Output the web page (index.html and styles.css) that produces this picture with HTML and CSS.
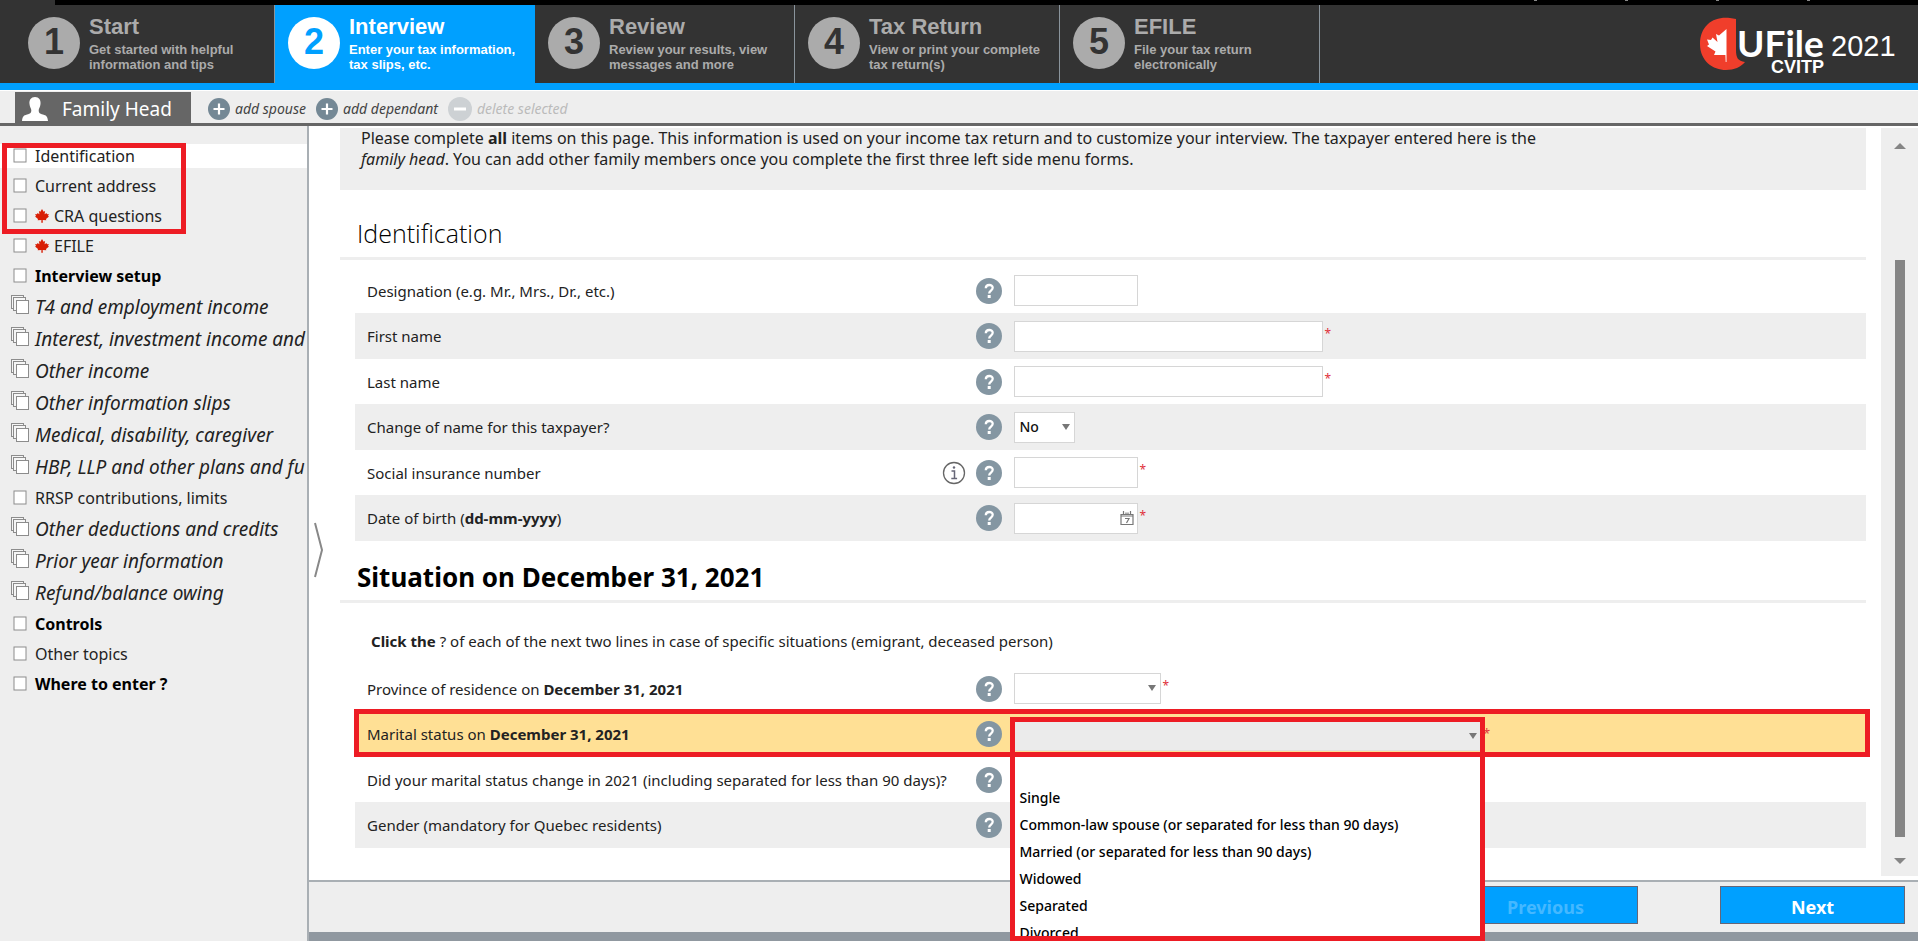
FILE: index.html
```
<!DOCTYPE html>
<html lang="en">
<head>
<meta charset="utf-8">
<title>UFile CVITP 2021 - Interview</title>
<link rel="stylesheet" href="styles.css">
</head>
<body>
<svg class="defs" aria-hidden="true">
  <symbol id="page" viewBox="0 0 18 20"><rect x="3" y="3" width="12" height="13" fill="#fff" stroke="#8c8c8c"/></symbol>
  <symbol id="stack" viewBox="0 0 18 20"><g fill="#f6f6f6" stroke="#8c8c8c"><rect x=".5" y=".5" width="12" height="13"/><rect x="2.5" y="2.5" width="12" height="13"/><rect x="5.5" y="5.5" width="12" height="13" fill="#fff"/></g></symbol>
  <symbol id="leaf" viewBox="0 0 14 14"><path fill="#d81e05" d="M7 0l1.6 2.8 1.5-.8-.5 3.3L11.500 4l.5 1.200 1.800-.3-.8 2 1 .7-3 2.500.3 1.200-3.600-.4.1 2.900H6.300l.1-2.900-3.700.4.300-1.200L0 7.600l1-.7-.8-2 1.800.3.500-1.200 1.900 1.300L3.900 2l1.500.8z"/></symbol>
  <symbol id="help" viewBox="0 0 26 26"><circle cx="13" cy="13" r="13" fill="#8496a2"/><path d="M9.800 10.200C9.800 6 16.700 6 16.700 9.800c0 2.700-3.500 2.900-3.500 5.700" fill="none" stroke="#fff" stroke-width="2.300"/><rect x="11.700" y="17" width="3" height="3" fill="#fff"/></symbol>
  <symbol id="plus" viewBox="0 0 22 22"><circle cx="11" cy="11" r="11" fill="#748895"/><path d="M11 5.500v11M5.500 11h11" stroke="#fff" stroke-width="2.200"/></symbol>
  <symbol id="minus" viewBox="0 0 24 24"><circle cx="12" cy="12" r="12" fill="#cdd1d4"/><path d="M6 12h12" stroke="#fff" stroke-width="3"/></symbol>
</svg>

<div class="topline"><span></span><span></span><span></span><span></span></div>

<header class="header">
  <nav class="steps">
    <a class="step step-first" href="#"><span class="num">1</span><span class="step-text"><strong>Start</strong>Get started with helpful<br>information and tips</span></a>
    <a class="step active" href="#" aria-current="step"><span class="num">2</span><span class="step-text"><strong>Interview</strong>Enter your tax information,<br>tax slips, etc.</span></a>
    <a class="step" href="#"><span class="num">3</span><span class="step-text"><strong>Review</strong>Review your results, view<br>messages and more</span></a>
    <a class="step step-wide" href="#"><span class="num">4</span><span class="step-text"><strong>Tax Return</strong>View or print your complete<br>tax return(s)</span></a>
    <a class="step" href="#"><span class="num">5</span><span class="step-text"><strong>EFILE</strong>File your tax return<br>electronically</span></a>
  </nav>
  <svg class="logo" viewBox="0 0 196 60" role="img" aria-label="UFile CVITP 2021">
    <path fill="#f03e2b" d="M30 1C14-1 0 8 0 27c0 17 13 26 26 26 8 0 15-3 19-8-7-1-9-4-9-12V2z"/>
    <path fill="#fff" d="M26.500 12v33h-.8l-.3-7H14l1.500-3.500L7 29l2-1.500-2-5 4 .5 1.500-2.500 5 4.500-1.500-8 3 1.500z"/>
    <text class="logo-name" x="37" y="40">UFile</text>
    <text class="logo-sub" x="71" y="56">CVITP</text>
    <text class="logo-year" x="131" y="39">2021</text>
  </svg>
</header>

<div class="toolbar">
  <button class="tab" type="button"><svg width="26" height="24" viewBox="0 0 26 24"><path fill="#fff" d="M13 0c4 0 6 3 5.500 7-.3 3-1.500 4-1.800 6 0 3 .8 3.500 4.300 4.500 3.500 1 4.500 2 5 6.500H0c.5-4.500 1.500-5.500 5-6.500 3.500-1 4.300-1.500 4.300-4.500-.3-2-1.500-3-1.800-6C7 3 9 0 13 0z"/></svg>Family Head</button>
  <button class="tool" type="button"><svg width="22" height="22"><use href="#plus"/></svg>add spouse</button>
  <button class="tool" type="button"><svg width="22" height="22"><use href="#plus"/></svg>add dependant</button>
  <button class="tool" type="button" disabled><svg width="24" height="24"><use href="#minus"/></svg>delete selected</button>
</div>

<div class="body">
  <aside class="sidebar">
    <ul class="menu">
      <li><a class="current" href="#"><svg class="doc"><use href="#page"/></svg>Identification</a></li>
      <li><a href="#"><svg class="doc"><use href="#page"/></svg>Current address</a></li>
      <li><a href="#"><svg class="doc"><use href="#page"/></svg><svg class="leaf"><use href="#leaf"/></svg>CRA questions</a></li>
      <li><a href="#"><svg class="doc"><use href="#page"/></svg><svg class="leaf"><use href="#leaf"/></svg>EFILE</a></li>
      <li><a class="bold" href="#"><svg class="doc"><use href="#page"/></svg>Interview setup</a></li>
      <li class="group"><a href="#"><svg class="doc"><use href="#stack"/></svg>T4 and employment income</a></li>
      <li class="group"><a href="#"><svg class="doc"><use href="#stack"/></svg>Interest, investment income and</a></li>
      <li class="group"><a href="#"><svg class="doc"><use href="#stack"/></svg>Other income</a></li>
      <li class="group"><a href="#"><svg class="doc"><use href="#stack"/></svg>Other information slips</a></li>
      <li class="group"><a href="#"><svg class="doc"><use href="#stack"/></svg>Medical, disability, caregiver</a></li>
      <li class="group"><a href="#"><svg class="doc"><use href="#stack"/></svg>HBP, LLP and other plans and fu</a></li>
      <li><a href="#"><svg class="doc"><use href="#page"/></svg>RRSP contributions, limits</a></li>
      <li class="group"><a href="#"><svg class="doc"><use href="#stack"/></svg>Other deductions and credits</a></li>
      <li class="group"><a href="#"><svg class="doc"><use href="#stack"/></svg>Prior year information</a></li>
      <li class="group"><a href="#"><svg class="doc"><use href="#stack"/></svg>Refund/balance owing</a></li>
      <li><a class="bold" href="#"><svg class="doc"><use href="#page"/></svg>Controls</a></li>
      <li><a href="#"><svg class="doc"><use href="#page"/></svg>Other topics</a></li>
      <li><a class="bold" href="#"><svg class="doc"><use href="#page"/></svg>Where to enter ?</a></li>
    </ul>
    <div class="callout callout-menu"></div>
  </aside>

  <div class="main">
    <div class="scroll">
      <main class="content">
        <p class="notice">Please complete <b>all</b> items on this page. This information is used on your income tax return and to customize your interview. The taxpayer entered here is the<br><i>family head</i>. You can add other family members once you complete the first three left side menu forms.</p>

        <h2 class="title light">Identification</h2>
        <div class="rows">
          <div class="row">
            <label for="designation">Designation (e.g. Mr., Mrs., Dr., etc.)</label>
            <svg class="help"><use href="#help"/></svg>
            <div class="field"><input id="designation" class="short" type="text"></div>
          </div>
          <div class="row shade">
            <label for="first">First name</label>
            <svg class="help"><use href="#help"/></svg>
            <div class="field"><input id="first" class="long" type="text"><span class="req">*</span></div>
          </div>
          <div class="row">
            <label for="last">Last name</label>
            <svg class="help"><use href="#help"/></svg>
            <div class="field"><input id="last" class="long" type="text"><span class="req">*</span></div>
          </div>
          <div class="row shade">
            <label for="change">Change of name for this taxpayer?</label>
            <svg class="help"><use href="#help"/></svg>
            <div class="field"><span class="select yesno"><select id="change"><option>No</option><option>Yes</option></select></span></div>
          </div>
          <div class="row">
            <div class="label-info"><label for="sin">Social insurance number</label><svg width="24" height="24" viewBox="0 0 24 24"><circle cx="12" cy="12" r="10.500" fill="#fff" stroke="#666" stroke-width="1.300"/><path d="M9.500 10h3v7.500M9.300 17.500h5.800" fill="none" stroke="#667" stroke-width="1.500"/><circle cx="12" cy="6.500" r="1.200" fill="#667"/></svg></div>
            <svg class="help"><use href="#help"/></svg>
            <div class="field"><input id="sin" class="short" type="text"><span class="req">*</span></div>
          </div>
          <div class="row shade">
            <label for="birth">Date of birth (<b>dd-mm-yyyy</b>)</label>
            <svg class="help"><use href="#help"/></svg>
            <div class="field"><span class="date"><input id="birth" class="short" type="text"><svg width="14" height="16" viewBox="0 0 14 16"><path d="M1 4.500h12v10H1zM1 6h12M3.500 1v4M10.500 1v4M6 2.500v2M8 2.500v2M5 8.500h4L6.500 13" fill="none" stroke="#777" stroke-width="1.200"/></svg></span><span class="req">*</span></div>
          </div>
        </div>

        <h2 class="title">Situation on December 31, 2021</h2>
        <p class="hint"><b>Click the</b> ? of each of the next two lines in case of specific situations (emigrant, deceased person)</p>
        <div class="rows">
          <div class="row">
            <label for="province">Province of residence on <b>December 31, 2021</b></label>
            <svg class="help"><use href="#help"/></svg>
            <div class="field"><span class="select province"><select id="province"><option></option></select></span><span class="req">*</span></div>
          </div>
          <div class="row marked">
            <label for="marital">Marital status on <b>December 31, 2021</b></label>
            <svg class="help"><use href="#help"/></svg>
            <div class="field">
              <span class="select marital"><select id="marital"><option></option></select></span><span class="req">*</span>
              <ul class="options" role="listbox" aria-label="Marital status">
                <li role="option">Single</li>
                <li role="option">Common-law spouse (or separated for less than 90 days)</li>
                <li role="option">Married (or separated for less than 90 days)</li>
                <li role="option">Widowed</li>
                <li role="option">Separated</li>
                <li role="option">Divorced</li>
              </ul>
              <div class="callout callout-options"></div>
            </div>
            <div class="callout callout-row"></div>
          </div>
          <div class="row">
            <span class="label">Did your marital status change in 2021 (including separated for less than 90 days)?</span>
            <svg class="help"><use href="#help"/></svg>
          </div>
          <div class="row shade">
            <span class="label">Gender (mandatory for Quebec residents)</span>
            <svg class="help"><use href="#help"/></svg>
          </div>
        </div>
      </main>
      <div class="scrollbar"><i class="arrow up"></i><i class="thumb"></i><i class="arrow down"></i></div>
      <svg class="handle" viewBox="0 0 10 56"><path d="M1 1l7 27-7 27" fill="none" stroke="#888" stroke-width="2"/></svg>
    </div>
    <footer class="footer">
      <button type="button" disabled>Previous</button>
      <button type="button">Next</button>
    </footer>
  </div>
</div>
</body>
</html>
```
FILE: styles.css
```
* { box-sizing: border-box; }
body {
  margin: 0;
  height: 100vh;
  display: flex;
  flex-direction: column;
  overflow: hidden;
  background: #fff;
  color: #222;
  font: 15px/20px "Noto Sans", "Open Sans", sans-serif;
}
button, input, select { font: inherit; color: inherit; }
button { border: 0; background: none; padding: 0; }
a { color: inherit; text-decoration: none; }
ul { list-style: none; margin: 0; padding: 0; }
.defs { display: none; }
svg { flex: none; }

.topline {
  flex: none;
  height: 5px;
  display: flex;
  justify-content: flex-end;
  gap: 88px;
  padding-right: 108px;
  background: #000;
  border-left: 55px solid #333;
}
.topline span { width: 3px; height: 1px; background: #888; }

.header {
  flex: none;
  display: flex;
  justify-content: space-between;
  background: #333;
  border-bottom: 7px solid #00a0ff;
  font-family: "Liberation Sans", Arial, sans-serif;
  font-weight: bold;
}
.steps { display: flex; }
.step {
  display: flex;
  align-items: flex-start;
  gap: 9px;
  width: 260px;
  height: 78px;
  padding: 12px 0 0 13px;
  border-right: 1px solid #8a949c;
  color: #ababab;
  font-size: 13px;
  line-height: 15px;
  white-space: nowrap;
}
.step-first { width: 275px; padding-left: 28px; }
.step-wide { width: 265px; }
.step.active { background: #00a0ff; color: #fff; border-color: #00a0ff; }
.num {
  flex: none;
  width: 52px;
  height: 52px;
  border-radius: 50%;
  background: #ababab;
  color: #333;
  text-align: center;
  font-size: 36px;
  line-height: 50px;
}
.active .num { background: #fff; color: #00a0ff; }
.step-text strong { display: block; font-size: 22px; line-height: 20px; margin-bottom: 5px; }
.logo { width: 196px; height: 60px; margin: 12px 22px 0 0; fill: #fff; }
.logo-name { font: bold 37px Lato, sans-serif; }
.logo-sub { font: bold 18px "Liberation Sans", sans-serif; }
.logo-year { font: 29px "Liberation Sans", sans-serif; }

.toolbar {
  flex: none;
  display: flex;
  align-items: center;
  gap: 10px;
  height: 36px;
  padding: 1px 0 0 15px;
  background: #eee;
  border-top: 1px solid #fff;
  border-bottom: 3px solid #666;
}
.tab {
  display: flex;
  align-items: center;
  gap: 14px;
  width: 176px;
  height: 31px;
  margin-right: 7px;
  padding: 3px 0 0 7px;
  background: #666;
  color: #fff;
  font-size: 19px;
}
.tool {
  display: flex;
  align-items: center;
  gap: 5px;
  padding-top: 3px;
  color: #444;
  font-size: 14px;
  font-style: italic;
}
.tool:disabled { color: #bbb; }

.body { flex: 1; min-height: 0; display: flex; }
.sidebar {
  position: relative;
  flex: none;
  width: 309px;
  padding-top: 15px;
  background: #eee;
  border-right: 2px solid #a9afb4;
  overflow: hidden;
}
.menu a {
  display: flex;
  align-items: center;
  height: 24px;
  padding-left: 11px;
  font-size: 16px;
  white-space: nowrap;
}
.menu li { padding: 3px 0; }
.menu .group { padding: 4px 0; }
.menu .group a { font-size: 19px; font-style: italic; }
.menu .group .doc { margin-bottom: 5px; }
.menu .current { background: #fff; }
.menu .bold { font-weight: bold; color: #000; }
.doc { width: 18px; height: 20px; margin-right: 6px; }
.leaf { width: 14px; height: 14px; margin-right: 5px; }

.callout { position: absolute; border: 5px solid #ed1c24; pointer-events: none; }
.callout-menu { left: 2px; top: 17px; width: 184px; height: 91px; }
.callout-row { left: -1px; right: -4px; top: -2px; bottom: 0; z-index: 3; }
.callout-options { left: -4px; top: 6px; width: 475px; height: 224px; z-index: 3; }

.main { flex: 1; min-width: 0; display: flex; flex-direction: column; }
.scroll { position: relative; flex: 1; min-height: 0; display: flex; padding-top: 2px; }
.content { flex: 1; min-width: 0; padding: 0 15px 0 31px; }
.handle { position: absolute; left: 5px; top: 396px; width: 10px; height: 56px; }
.notice {
  height: 62px;
  margin: 0;
  padding-left: 21px;
  background: #eee;
  font-size: 16px;
  line-height: 21px;
}
.title {
  margin: 0;
  padding: 22px 0 9px 17px;
  border-bottom: 3px solid #eee;
  color: #000;
  font-size: 26px;
  line-height: 28px;
}
.title.light { padding-top: 29px; padding-bottom: 10px; font-family: "Open Sans", sans-serif; font-weight: 300; font-size: 25px; }
.hint { margin: 0; padding: 28px 0 15px 31px; }
.rows { padding-left: 15px; }
.light + .rows { padding-top: 8px; }
.row {
  position: relative;
  display: grid;
  grid-template-columns: 41% 39px 1fr;
  align-items: center;
  height: 45px;
}
.row label, .row .label { padding-left: 12px; white-space: nowrap; }
.label-info { display: flex; align-items: center; justify-content: space-between; padding-right: 9px; }
.shade { background: #eee; height: 46px; }
.marked { background: #ffe095; height: 46px; }
.help { width: 26px; height: 26px; margin-left: 1px; }
.field { display: flex; align-items: flex-start; }
.marked .field { position: relative; height: 46px; padding-top: 10px; }
.field input, .field select {
  display: block;
  height: 31px;
  border: 1px solid #d6d6d6;
  border-radius: 0;
  background: #fff;
  padding: 0 5px;
}
.short { width: 124px; }
.long { width: 309px; }
.req { margin-left: 2px; color: #e0303a; font-size: 12px; line-height: 26px; }
.date, .select { position: relative; }
.date svg { position: absolute; right: 4px; top: 7px; }
.select select { appearance: none; width: 100%; font-size: 14px; font-weight: 500; color: #111; }
.select::after {
  content: "";
  position: absolute;
  right: 5px;
  top: 12px;
  border: 4px solid transparent;
  border-top: 6px solid #777;
  border-bottom: 0;
}
.yesno { width: 61px; }
.province { width: 147px; }
.marital { width: 468px; }
.marital select { height: 30px; background: #ebebeb; border-color: #ddd; }
.options {
  position: absolute;
  left: 0;
  top: 46px;
  width: 468px;
  height: 180px;
  padding: 27px 0 0 6px;
  background: #fff;
  color: #000;
  font-size: 14px;
  font-weight: 500;
  z-index: 2;
}
.options li { line-height: 27px; white-space: nowrap; }

.scrollbar {
  flex: none;
  display: flex;
  flex-direction: column;
  align-items: center;
  width: 37px;
  padding: 15px 0 12px;
  background: #eee;
  margin-bottom: 4px;
}
.arrow { border: 6px solid transparent; }
.up { border-top: 0; border-bottom: 6px solid #858585; }
.down { border-bottom: 0; border-top: 6px solid #858585; }
.thumb { flex: 1; width: 10px; margin: 111px 0 21px; background: #858585; }

.footer {
  flex: none;
  display: flex;
  justify-content: flex-end;
  gap: 82px;
  height: 61px;
  padding: 4px 13px 0 0;
  background: #eee;
  border-top: 2px solid #a9afb4;
  border-bottom: 9px solid #9098a0;
}
.footer button {
  width: 185px;
  height: 38px;
  padding-top: 4px;
  background: #00a0ff;
  border: 1px solid #667;
  color: #fff;
  font-size: 18px;
  font-weight: bold;
}
.footer button:disabled { color: #45b8ff; }
```
